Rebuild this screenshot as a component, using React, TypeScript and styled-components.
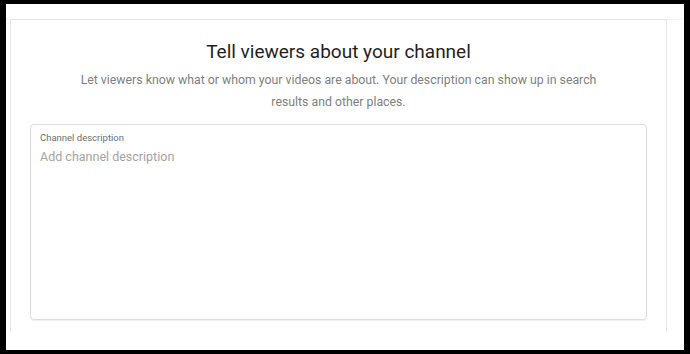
import React from "react";
import styled, { createGlobalStyle } from "styled-components";

const Global = createGlobalStyle`
  html, body { margin: 0; padding: 0; background: #fff; }
  body { font-family: Roboto, "Noto Sans", Arial, sans-serif; }
`;

const Frame = styled.div`
  box-sizing: border-box;
  width: 690px;
  height: 354px;
  border-style: solid;
  border-color: #000;
  border-width: 4px 6px 4px 6px;
  background: #fff;
  overflow: hidden;
  display: flex;
  flex-direction: column;
`;

const TopRule = styled.div`
  margin-top: 15px;
  height: 0;
  border-top: 1px dotted #ececec;
`;

const Card = styled.section`
  box-sizing: border-box;
  margin: -1px 17px 0 4px;
  height: 312px;
  border: 1px solid #e4e4e4;
  border-bottom: none;
  border-radius: 2px 2px 0 0;
  padding: 19px 19px 0 19px;
  display: flex;
  flex-direction: column;
  align-items: center;
`;

const Title = styled.h1`
  margin: 0;
  font-family: Roboto, Arial, sans-serif;
  font-weight: 400;
  font-size: 19px;
  line-height: 26px;
  color: #1f1f1f;
`;

const Subtitle = styled.p`
  margin: 4px 0 0 0;
  max-width: 540px;
  text-align: center;
  font-family: Roboto, Arial, sans-serif;
  font-size: 12.3px;
  line-height: 22px;
  color: #808080;
`;

const Field = styled.div`
  box-sizing: border-box;
  align-self: stretch;
  margin-top: 11px;
  height: 196px;
  border: 1px solid #dcdcdc;
  border-radius: 4px;
  box-shadow: 0 1px 1px rgba(0, 0, 0, 0.06);
  padding: 6px 9px;
  display: flex;
  flex-direction: column;
`;

const Label = styled.label`
  font-family: Roboto, Arial, sans-serif;
  font-size: 9.5px;
  line-height: 14px;
  color: #6e6e6e;
`;

const Placeholder = styled.div`
  margin-top: 3px;
  font-family: Roboto, Arial, sans-serif;
  font-size: 12.5px;
  line-height: 18px;
  color: #a3a3a3;
`;

export default function App() {
  return (
    <>
      <Global />
      <Frame>
        <TopRule />
        <Card>
          <Title>Tell viewers about your channel</Title>
          <Subtitle>
            Let viewers know what or whom your videos are about. Your description can show up in search results and other places.
          </Subtitle>
          <Field>
            <Label>Channel description</Label>
            <Placeholder>Add channel description</Placeholder>
          </Field>
        </Card>
      </Frame>
    </>
  );
}
